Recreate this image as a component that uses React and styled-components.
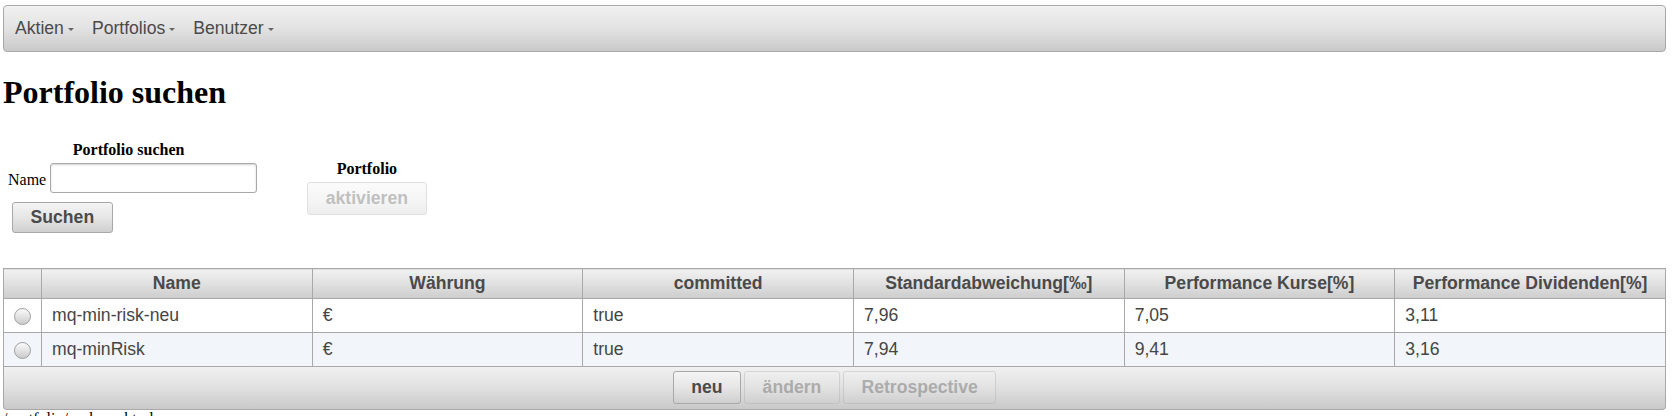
import React from 'react'
import styled, { createGlobalStyle } from 'styled-components'

const GlobalStyle = createGlobalStyle`
    body {
        margin: 5px 8px 0 3px;
        font-family: "Liberation Serif", "Times New Roman", serif;
        font-size: 16px;
        color: #000;
        background: #fff;
    }
`

const sans = `"Liberation Sans", Arial, sans-serif`

const MenuBar = styled.nav`
    display: flex;
    align-items: center;
    height: 47px;
    box-sizing: border-box;
    padding-left: 1px;
    border: 1px solid #a8a8a8;
    border-radius: 4px;
    background: linear-gradient(to bottom, #f1f1f1 0%, #e2e2e2 50%, #c9c9c9 100%);
    font-family: ${sans};
    font-size: 17.6px;
    color: #4a4a4a;
`

const MenuItem = styled.span`
    display: flex;
    align-items: center;
    padding: 0 8px 0 10px;
    cursor: pointer;
`

const Caret = styled.span`
    width: 0;
    height: 0;
    margin-left: 4px;
    margin-top: 1px;
    border-left: 3px solid transparent;
    border-right: 3px solid transparent;
    border-top: 3px solid #666;
`

const Title = styled.h1`
    margin: 22px 0 0 0;
    font-size: 32px;
    line-height: 36px;
    font-weight: bold;
`

const FormArea = styled.div`
    display: flex;
    align-items: center;
    margin-top: 31px;
    padding-left: 5px;
`

const Panel = styled.div`
    display: flex;
    flex-direction: column;
    margin-left: ${p => p.$offset || 0}px;
`

const Caption = styled.div`
    text-align: center;
    font-weight: bold;
    line-height: 18px;
    margin-bottom: 4px;
    padding-right: ${p => p.$shift || 0}px;
`

const FieldRow = styled.div`
    display: flex;
    align-items: center;
    gap: 4px;
`

const Label = styled.label`
    line-height: 18px;
    padding-top: 4px;
`

const TextInput = styled.input`
    width: 207px;
    height: 30px;
    box-sizing: border-box;
    border: 1px solid #a8a8a8;
    border-radius: 3px;
    box-shadow: inset 0 1px 2px rgba(0, 0, 0, 0.18);
    background: #fff;
    font-family: ${sans};
    font-size: 16px;
    padding: 0 4px;
`

const Button = styled.button`
    height: 33px;
    box-sizing: border-box;
    padding: 0 1em;
    border: 1px solid #a8a8a8;
    border-radius: 3px;
    background: linear-gradient(to bottom, #f4f4f4 0%, #e6e6e6 50%, #cfcfcf 100%);
    font-family: ${sans};
    font-size: 17.6px;
    font-weight: bold;
    color: #4a4a4a;
    opacity: ${p => (p.disabled ? 0.35 : 1)};
    cursor: ${p => (p.disabled ? 'default' : 'pointer')};
`

const SearchButton = styled(Button)`
    align-self: flex-start;
    margin-top: 9px;
    margin-left: 4px;
    height: 31px;
`

const TableWrap = styled.div`
    margin-top: 35px;
    font-family: ${sans};
    font-size: 17.6px;
    color: #454545;
`

const Table = styled.table`
    width: 100%;
    table-layout: fixed;
    border-collapse: collapse;
    border: 1px solid #a8a8a8;
`

const HeadCell = styled.th`
    height: 29px;
    padding: 0 4px;
    border: 1px solid #a8a8a8;
    background: linear-gradient(to bottom, #f1f1f1 0%, #e0e0e0 50%, #cdcdcd 100%);
    font-weight: bold;
    text-align: center;
    color: #4a4a4a;
    white-space: nowrap;
`

const Row = styled.tr`
    background: ${p => (p.$odd ? '#f2f5f9' : '#fff')};
`

const Cell = styled.td`
    height: 33px;
    padding: 0 10px;
    border: 1px solid #a8a8a8;
    text-align: ${p => (p.$center ? 'center' : 'left')};
    vertical-align: middle;
`

const Radio = styled.span`
    display: inline-block;
    width: 17px;
    height: 17px;
    box-sizing: border-box;
    border: 1px solid #a0a0a0;
    border-radius: 50%;
    vertical-align: middle;
    background: linear-gradient(to bottom, #fbfbfb 0%, #e3e3e3 50%, #cbcbcb 100%);
`

const Footer = styled.div`
    display: flex;
    justify-content: center;
    gap: 3px;
    height: 43px;
    box-sizing: border-box;
    padding-top: 4px;
    border: 1px solid #a8a8a8;
    border-top: none;
    border-radius: 0 0 4px 4px;
    background: linear-gradient(to bottom, #f1f1f1 0%, #e0e0e0 50%, #c9c9c9 100%);
`

const PathText = styled.div`
    line-height: 18px;
`

const columns = [
    'Name',
    'Währung',
    'committed',
    'Standardabweichung[‰]',
    'Performance Kurse[%]',
    'Performance Dividenden[%]',
]

const portfolios = [
    ['mq-min-risk-neu', '€', 'true', '7,96', '7,05', '3,11'],
    ['mq-minRisk', '€', 'true', '7,94', '9,41', '3,16'],
]

const App = () => {
    return (
        <>
            <GlobalStyle />
            <MenuBar>
                <MenuItem>Aktien<Caret /></MenuItem>
                <MenuItem>Portfolios<Caret /></MenuItem>
                <MenuItem>Benutzer<Caret /></MenuItem>
            </MenuBar>

            <Title>Portfolio suchen</Title>

            <FormArea>
                <Panel>
                    <Caption $shift={8}>Portfolio suchen</Caption>
                    <FieldRow>
                        <Label htmlFor="name">Name</Label>
                        <TextInput id="name" />
                    </FieldRow>
                    <SearchButton>Suchen</SearchButton>
                </Panel>
                <Panel $offset={50}>
                    <Caption>Portfolio</Caption>
                    <Button disabled>aktivieren</Button>
                </Panel>
            </FormArea>

            <TableWrap>
                <Table>
                    <colgroup>
                        <col style={{ width: '38px' }} />
                        {columns.map(c => <col key={c} />)}
                    </colgroup>
                    <thead>
                        <tr>
                            <HeadCell />
                            {columns.map(c => <HeadCell key={c}>{c}</HeadCell>)}
                        </tr>
                    </thead>
                    <tbody>
                        {portfolios.map((row, i) => (
                            <Row key={row[0]} $odd={i % 2 === 1}>
                                <Cell $center><Radio /></Cell>
                                {row.map((v, j) => <Cell key={j}>{v}</Cell>)}
                            </Row>
                        ))}
                    </tbody>
                </Table>
                <Footer>
                    <Button>neu</Button>
                    <Button disabled>ändern</Button>
                    <Button disabled>Retrospective</Button>
                </Footer>
            </TableWrap>

            <PathText>/portfolio/suchen.xhtml</PathText>
        </>
    )
}

export default App
